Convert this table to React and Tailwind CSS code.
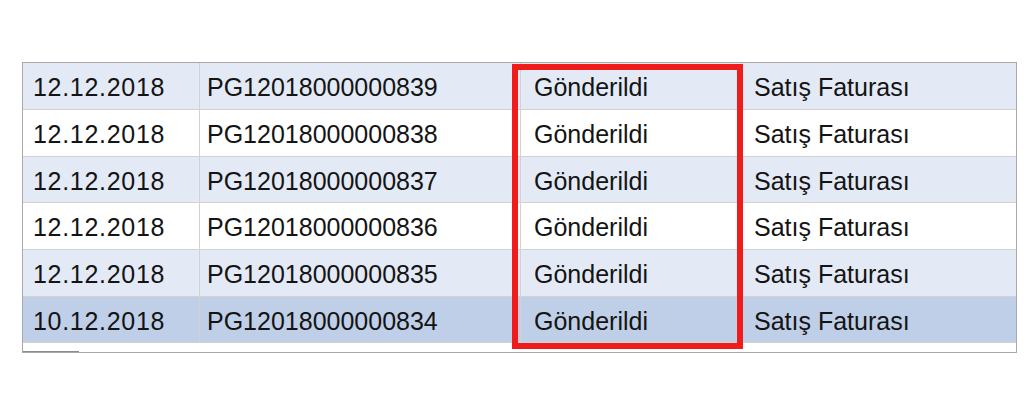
import React from 'react';

const rows = [
  { date: '12.12.2018', no: 'PG12018000000839', status: 'Gönderildi', type: 'Satış Faturası' },
  { date: '12.12.2018', no: 'PG12018000000838', status: 'Gönderildi', type: 'Satış Faturası' },
  { date: '12.12.2018', no: 'PG12018000000837', status: 'Gönderildi', type: 'Satış Faturası' },
  { date: '12.12.2018', no: 'PG12018000000836', status: 'Gönderildi', type: 'Satış Faturası' },
  { date: '12.12.2018', no: 'PG12018000000835', status: 'Gönderildi', type: 'Satış Faturası' },
  { date: '10.12.2018', no: 'PG12018000000834', status: 'Gönderildi', type: 'Satış Faturası' },
];

const rowBg = (i) => {
  if (i === rows.length - 1) return 'bg-[#bfcfe7]';
  return i % 2 === 0 ? 'bg-[#e3eaf5]' : 'bg-white';
};

const App = () => {
  return (
    <div className="w-[1024px] h-[412px] bg-white pt-[62px] pl-[22px]" style={{ fontFamily: '"Liberation Sans", Arial, sans-serif' }}>
      <div className="relative w-[995px] border-t border-l border-r border-b border-[#a9a9a9]">
        {rows.map((r, i) => (
          <div
            key={r.no}
            className={`flex border-b border-[#d2d2d2] text-[25px] text-[#141414] ${rowBg(i)} ${i % 3 === 2 ? 'h-[46px]' : 'h-[47px]'}`}
          >
            <div className="w-[177px] flex items-center pt-[4px] pl-[10px] border-r border-[#d2d2d2] tracking-[0.7px]">{r.date}</div>
            <div className="w-[321px] flex items-center pt-[4px] pl-[7px] border-r border-[#d2d2d2]">{r.no}</div>
            <div className="w-[221px] flex items-center pt-[4px] pl-[13px] border-r border-[#d2d2d2]">{r.status}</div>
            <div className="flex-1 flex items-center pt-[4px] pl-[12px]">{r.type}</div>
          </div>
        ))}
        <div className="h-[9px] bg-white relative">
          <div className="absolute left-0 bottom-0 w-[56px] h-[1px] bg-[#8c8c8c]" />
        </div>

        {/* highlight frame drawn over the status column */}
        <div className="absolute left-[489px] top-[1px] w-[231px] h-[285px] border-[6px] border-[#f01c1c] pointer-events-none" />
      </div>
    </div>
  );
};

export default App;
